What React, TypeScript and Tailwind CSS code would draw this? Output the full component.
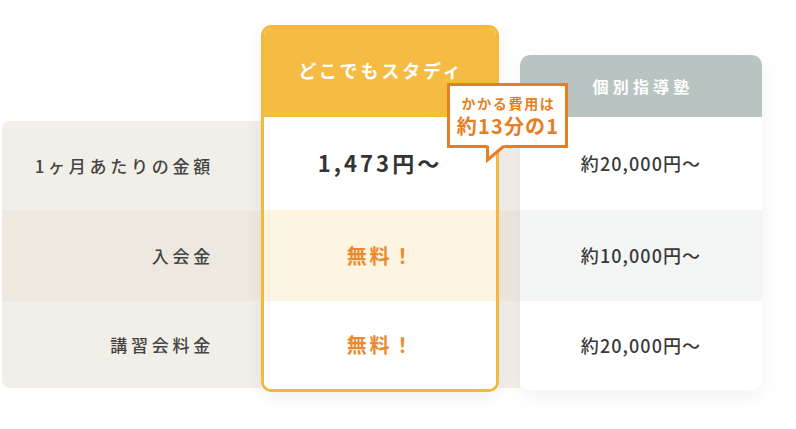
import React from "react"

const font = { fontFamily: '"Noto Sans CJK JP", "Noto Sans", sans-serif' }

const labels = [
  { text: "1ヶ月あたりの金額", h: "h-[89px]", bg: "bg-[#f2efe9]" },
  { text: "入会金", h: "h-[91px]", bg: "bg-[#ede8e0]" },
  { text: "講習会料金", h: "h-[87px]", bg: "bg-[#f2efe9]" },
]

const juku = [
  { text: "約20,000円〜", h: "h-[93px]", bg: "bg-white" },
  { text: "約10,000円〜", h: "h-[91px]", bg: "bg-[#f4f5f5]" },
  { text: "約20,000円〜", h: "h-[89px]", bg: "bg-white" },
]

function Bubble() {
  return (
    <div className="absolute left-[447px] top-[83px] z-20">
      <div className="relative w-[121px] h-[65px] border-[3px] border-[#e67f24] bg-white flex flex-col items-center justify-center text-[#e67f24] font-bold leading-none">
        <span className="text-[14px] tracking-[0.12em] mb-[6px] pl-[2px]">かかる費用は</span>
        <span className="text-[20px] tracking-[0.06em] pl-[1px]">約13分の1</span>
      </div>
      <svg className="absolute left-[38px] top-[61px]" width="24" height="20" viewBox="0 0 24 20">
        <path d="M2.5 0 L2.5 16 L20 1 Z" fill="#ffffff" />
        <path d="M2.5 2 L2.5 16 L19 2" fill="none" stroke="#e67f24" strokeWidth="3" strokeLinejoin="miter" />
      </svg>
    </div>
  )
}

export default function App() {
  return (
    <div className="w-[796px] h-[429px] bg-white relative overflow-hidden" style={font}>
      <div className="flex items-start pl-[2px]">
        {/* 項目ラベル */}
        <div className="w-[259px] mt-[121px] rounded-l-lg overflow-hidden">
          {labels.map((l, i) => (
            <div
              key={i}
              className={`${l.h} ${l.bg} flex items-center justify-end pr-[47px] text-[17px] tracking-[0.22em] text-[#444444] font-medium`}
            >
              {l.text}
            </div>
          ))}
        </div>

        {/* どこでもスタディ */}
        <div className="w-[238px] mt-[25px] border-[3px] border-[#f5b83f] rounded-[10px] overflow-hidden bg-white relative z-10 shadow-[0_6px_18px_rgba(0,0,0,0.06)]">
          <div className="h-[89px] bg-[#f6bb42] flex items-center justify-center pb-[6px] pl-[2px] text-white font-bold text-[18px] leading-none tracking-[0.16em]">
            どこでもスタディ
          </div>
          <div className="h-[93px] bg-white flex items-center justify-center text-[#333333] font-bold text-[22px] tracking-[0.14em] pb-[2px]">
            1,473円〜
          </div>
          <div className="h-[91px] bg-[#fef4e2] flex items-center justify-center text-[#ea8a2e] font-bold text-[20px] tracking-[0.14em] pl-[2px]">
            無料！
          </div>
          <div className="h-[88px] bg-white flex items-center justify-center text-[#ea8a2e] font-bold text-[20px] tracking-[0.14em] pl-[2px]">
            無料！
          </div>
        </div>

        {/* カード間の帯 */}
        <div className="w-[21px] mt-[121px]">
          {labels.map((l, i) => (
            <div key={i} className={`${l.h} ${l.bg}`} />
          ))}
        </div>

        {/* 個別指導塾 */}
        <div className="w-[242px] mt-[55px] rounded-[10px] overflow-hidden bg-white shadow-[0_6px_22px_rgba(0,0,0,0.06)]">
          <div className="h-[62px] bg-[#b8c4c1] flex items-center justify-center text-white font-bold text-[16px] leading-none tracking-[0.26em] pl-[4px]">
            個別指導塾
          </div>
          {juku.map((r, i) => (
            <div
              key={i}
              className={`${r.h} ${r.bg} flex items-center justify-center text-[#3a3a3a] font-medium text-[18px] tracking-[0.06em]`}
            >
              {r.text}
            </div>
          ))}
        </div>
      </div>

      <Bubble />
    </div>
  )
}
